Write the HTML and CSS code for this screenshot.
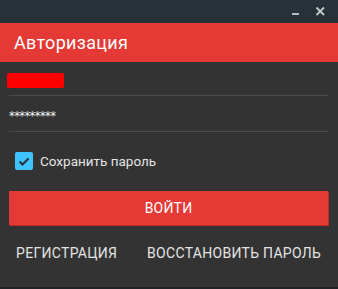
FILE: index.html
```html
<!DOCTYPE html>
<html lang="ru">
<head>
<meta charset="utf-8">
<link rel="stylesheet" href="styles.css">
</head>
<body>
<div class="window">
  <div class="titlebar">
    <svg class="ctl" width="338" height="23" viewBox="0 0 338 23">
      <rect x="292" y="13" width="7" height="2" fill="#b6bcc0"/>
      <path d="M316.5 7.5 L324 15 M324 7.5 L316.5 15" stroke="#c4c9cc" stroke-width="1.8"/>
    </svg>
  </div>
  <div class="header">Авторизация</div>
  <div class="form">
    <div class="field field-user"><span class="scribble"></span></div>
    <div class="field field-pass"><span class="stars">*********</span></div>
    <label class="remember"><span class="check"><svg width="18" height="18" viewBox="0 0 18 18"><path d="M4.5 9.5 L7.5 12.5 L13.5 6.5" fill="none" stroke="#263238" stroke-width="2"/></svg></span><span class="remember-text">Сохранить пароль</span></label>
    <div class="btn">ВОЙТИ</div>
    <div class="links">
      <span class="link">РЕГИСТРАЦИЯ</span>
      <span class="link">ВОССТАНОВИТЬ ПАРОЛЬ</span>
    </div>
  </div>
  <div class="bottom-edge"></div>
</div>
</body>
</html>
```
FILE: styles.css
```css
html, body {
  margin: 0;
  padding: 0;
  background: #333333;
}
.window {
  width: 338px;
  height: 289px;
  display: flex;
  flex-direction: column;
  font-family: Roboto, "Liberation Sans", sans-serif;
  background: #333333;
  overflow: hidden;
}
.titlebar {
  height: 23px;
  background: #273238;
  flex: none;
}
.ctl { display: block; }
.header {
  height: 39px;
  line-height: 39px;
  background: #e53935;
  color: #ffffff;
  font-size: 18px;
  letter-spacing: 0.3px;
  padding-left: 14px;
  flex: none;
}
.form {
  flex: 1;
  display: flex;
  flex-direction: column;
  padding: 0 10px 0 9px;
}
.field {
  border-bottom: 1px solid #4a4a4a;
  display: flex;
  align-items: center;
}
.field-user {
  height: 33px;
}
.scribble {
  display: block;
  width: 57px;
  height: 15px;
  margin-left: -2px;
  margin-top: 3px;
  background: #ff0000;
  border-radius: 2px;
}
.field-pass {
  height: 35px;
}
.stars {
  color: #eef3f6;
  font-size: 11.5px;
  letter-spacing: -0.6px;
  font-family: "DejaVu Sans", sans-serif;
  margin-top: 4px;
}
.remember {
  display: flex;
  align-items: center;
  margin-top: 20px;
  margin-left: 6px;
  height: 18px;
}
.check {
  width: 18px;
  height: 18px;
  background: #40c4ff;
  border-radius: 2px;
  display: block;
}
.check svg { display: block; }
.remember-text {
  margin-left: 7px;
  color: #e4e4e4;
  font-size: 13.5px;
}
.btn {
  margin-top: 21px;
  height: 34px;
  background: #e53935;
  box-shadow: 1px 1px 0 #c62828;
  color: #ffffff;
  font-size: 14px;
  letter-spacing: 0.2px;
  display: flex;
  align-items: center;
  justify-content: center;
}
.links {
  display: flex;
  justify-content: space-between;
  margin-top: 18px;
  padding: 0 7px 0 7px;
  height: 20px;
  align-items: center;
}
.link {
  color: #e4e4e4;
  font-size: 14px;
  letter-spacing: 0.3px;
}
.bottom-edge {
  height: 2px;
  background: #1f2326;
  flex: none;
}
```
